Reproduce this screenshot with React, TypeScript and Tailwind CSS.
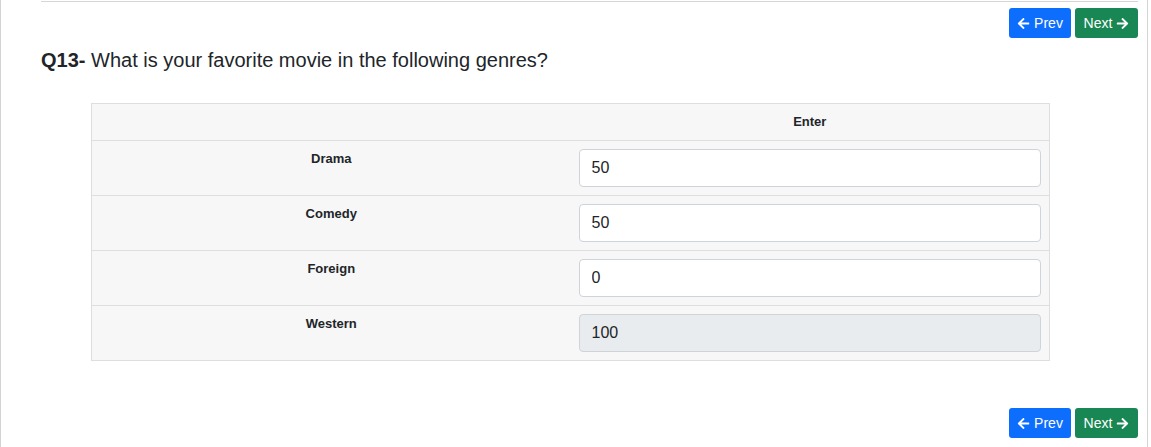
import { FaArrowLeft, FaArrowRight } from 'react-icons/fa';

const rows = [
  { label: 'Drama', value: '50', disabled: false },
  { label: 'Comedy', value: '50', disabled: false },
  { label: 'Foreign', value: '0', disabled: false },
  { label: 'Western', value: '100', disabled: true },
];

function NavButtons() {
  return (
    <div className="flex justify-end gap-[4px]">
      <button className="flex h-[30px] w-[62px] items-center justify-center gap-[4px] rounded-[3px] bg-[#0d6efd] text-[14px] text-white">
        <FaArrowLeft className="text-[13px]" />
        Prev
      </button>
      <button className="flex h-[30px] w-[63px] items-center justify-center gap-[4px] rounded-[3px] bg-[#198754] text-[14px] text-white">
        Next
        <FaArrowRight className="text-[13px]" />
      </button>
    </div>
  );
}

export default function App() {
  return (
    <div
      className="min-h-[447px] w-[1148px] border-x border-[#d4d4d4] bg-white pl-[40px] pr-[9px] text-[#212529]"
      style={{ fontFamily: '"Liberation Sans", Arial, sans-serif' }}
    >
      <div className="h-px translate-y-px bg-[#d6d6d6]" />
      <div className="pt-[7px]">
        <NavButtons />
      </div>

      <h2 className="mt-[10px] text-[20px] leading-[24px]">
        <span className="font-bold">Q13-</span> What is your favorite movie in the following genres?
      </h2>

      <table className="ml-[50px] mt-[31px] w-[959px] table-fixed border-collapse border border-[#dedede] bg-[#f7f7f7] text-[13px]">
        <thead>
          <tr className="border-b border-[#dedede]">
            <th className="w-1/2 p-2 leading-[20px]" />
            <th className="w-1/2 p-2 text-center font-bold leading-[20px]">Enter</th>
          </tr>
        </thead>
        <tbody>
          {rows.map((row) => (
            <tr key={row.label} className="border-b border-[#dedede] align-top">
              <td className="p-2 text-center font-bold leading-[20px]">{row.label}</td>
              <td className="p-2">
                <input
                  readOnly
                  disabled={row.disabled}
                  value={row.value}
                  className={`block h-[38px] w-full rounded-[4px] border border-[#ced4da] px-3 text-[16px] text-[#212529] ${
                    row.disabled ? 'bg-[#e9ecef]' : 'bg-white'
                  }`}
                />
              </td>
            </tr>
          ))}
        </tbody>
      </table>

      <div className="mt-[47px]">
        <NavButtons />
      </div>
    </div>
  );
}
